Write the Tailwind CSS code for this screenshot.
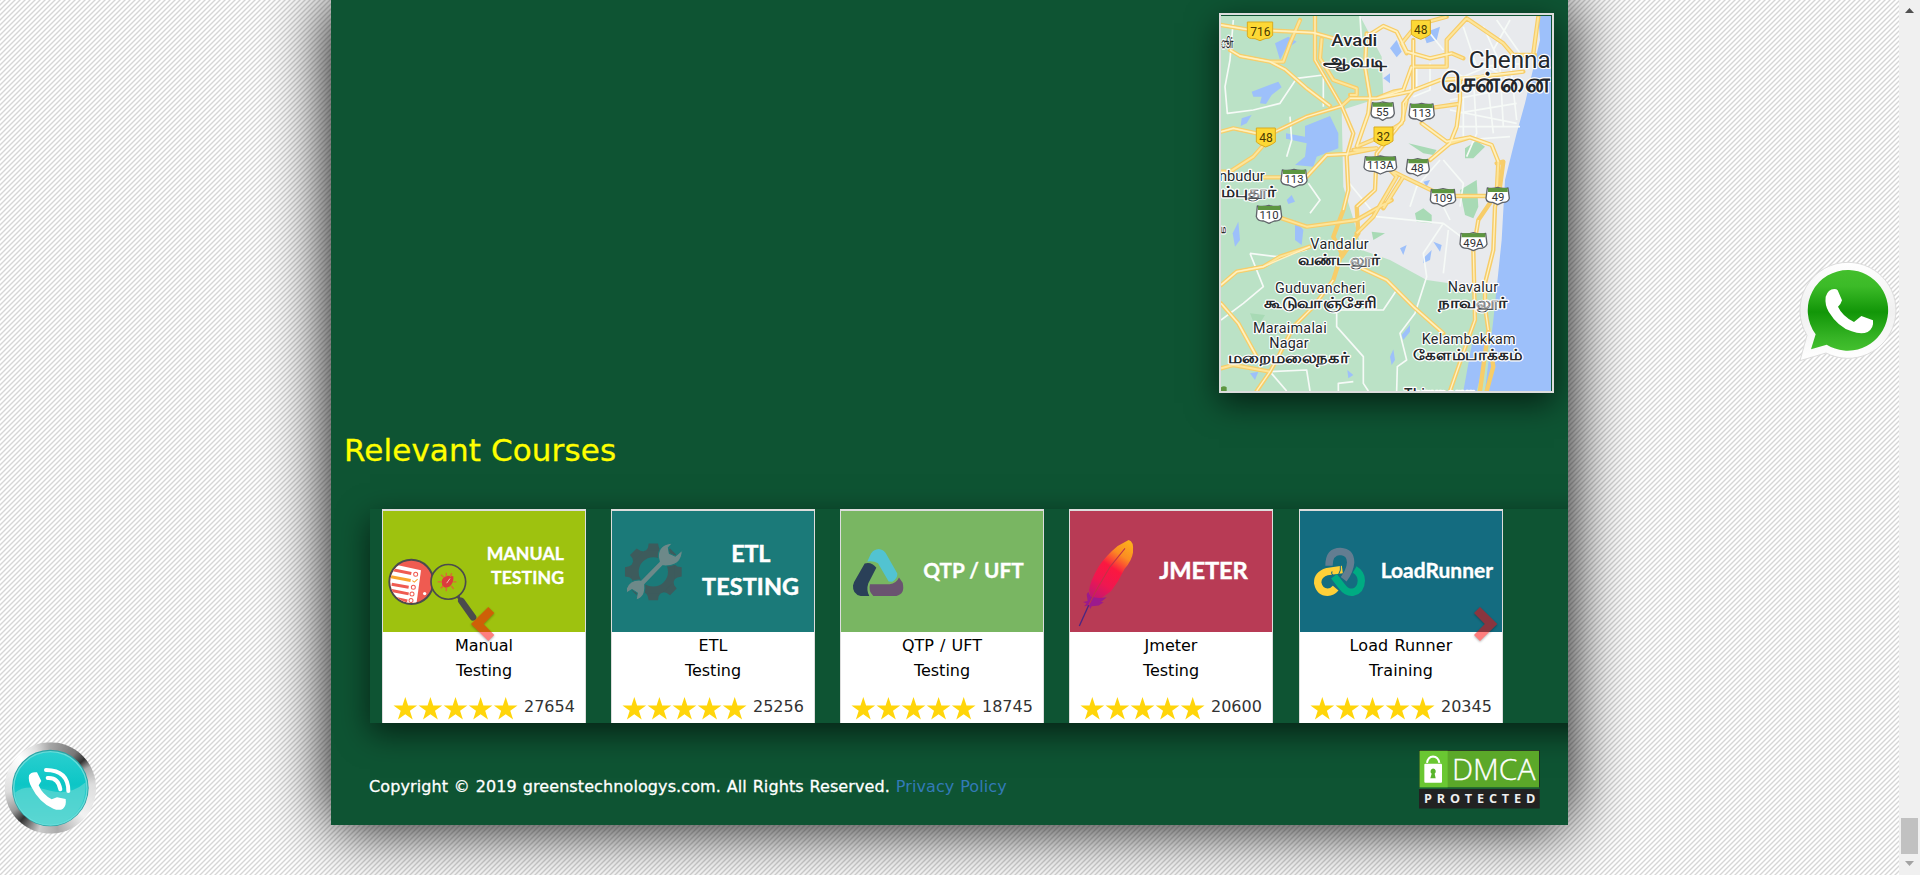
<!DOCTYPE html>
<html lang="en">
<head>
<meta charset="utf-8">
<title>Greens Technologys</title>
<script src="https://cdn.jsdelivr.net/npm/@tailwindcss/browser@4"></script>
</head>
<body class="h-[875px] overflow-hidden font-['DejaVu_Sans',sans-serif] text-base text-black">
<svg width="0" height="0" class="absolute">
  <defs>
    <path id="star" d="M11.8 0 L14.6 8.6 H23.6 L16.4 13.8 L19.2 22.5 L11.8 17.2 L4.4 22.5 L7.2 13.8 L0 8.6 H9Z"/>
    <g id="stars" fill="#ffd50a"><use href="#star"/><use href="#star" x="25.1"/><use href="#star" x="50.2"/><use href="#star" x="75.3"/><use href="#star" x="100.4"/></g>
  </defs>
</svg>
<div class="relative flex h-[875px] w-[1920px]">
  <main class="relative flex h-[875px] flex-1 overflow-hidden bg-white">
    <svg class="absolute inset-0" width="1899" height="875">
      <defs><pattern id="weave" width="5" height="5" patternUnits="userSpaceOnUse"><rect width="5" height="5" fill="#fff"/><path d="M-1 6L6 -1M-1 1L1 -1M4 6L6 4" stroke="#d6d6d6" stroke-width="1.4"/></pattern></defs>
      <rect width="1899" height="875" fill="url(#weave)"/>
    </svg>
    <section class="relative ml-[331px] h-[825px] w-[1237px] bg-[#0e5433] shadow-[0_0_60px_#000]">
      <div class="flex h-[825px] flex-col overflow-hidden">
        <!-- Map -->
        <div class="mt-[13px] mr-[14px] h-[380px] w-[335px] shrink-0 self-end border-2 border-[#ddd] pt-px shadow-[0_10px_30px_rgba(0,0,0,0.6)]">
          <svg width="330" height="375" viewBox="33 48 990 1125" font-family="Roboto, 'Noto Sans', sans-serif">
            <rect x="33" y="48" width="990" height="1125" fill="#bbe2c6"/>
            <path d="M450 48H1023V900L860 870L650 840L540 780L455 750L440 690L400 560L395 330L520 290L515 170Z" fill="#e8eaed"/>
            <path d="M985 48H1023V1173H825L850 960L875 720L885 540L920 400L945 310L990 120Z" fill="#9dc0fa"/>
            <path d="M760 1173L790 1010L845 1000L800 1173Z" fill="#9dc0fa"/>
            <g fill="#9dc0fa"><path d="M285 378L360 348L385 400V445L320 470L310 500L255 495L285 470L290 430L228 416V400L285 410Z"/><path d="M125 275L205 245L215 262L185 285L168 312L150 310L155 290L130 290Z"/><path d="M195 130L235 110L260 125L225 150L210 180Z"/><path d="M540 145L560 120L575 155L560 172Z"/><path d="M640 100L690 80L680 120L650 130Z"/><path d="M520 235L540 220V250Z"/><path d="M255 660L280 690L275 735L255 720Z"/><path d="M68 700L85 665L90 720L75 740Z"/><path d="M570 745L590 735L580 765Z"/><path d="M670 725L695 735L690 755Z"/><path d="M640 775L665 750L660 780L640 790Z"/><path d="M575 1005L600 975V995L580 1020Z"/><path d="M540 1070L550 1048L555 1080L545 1095Z"/><path d="M120 1120L145 1115L135 1140Z"/><path d="M412 1110L430 1125L415 1135Z"/><path d="M95 355L125 345L110 370L92 378Z"/><path d="M230 600L245 585L255 605L235 612Z"/><path d="M640 545L660 540L650 560Z"/></g>
            <g fill="#a8dab5"><path d="M595 430L680 450L670 465L640 460Z"/><path d="M765 445L800 422L825 440L790 475H765Z"/><path d="M750 570L800 540L805 620L790 655L765 645Z"/><path d="M615 640L640 625L665 645V670L620 665Z"/><path d="M485 695L525 700L490 720Z"/><path d="M120 940L165 945L150 970L130 965Z"/></g>
            <g fill="none" stroke="#f6faf7" stroke-width="5" stroke-linejoin="round">
              <path d="M70 60L60 180L45 260L52 340L130 330M130 330L210 310L260 235L340 225M240 350L245 420L230 470M450 48L455 130M340 230V320M410 540L500 650L700 670L780 730M700 670L640 760L650 830L615 940L570 1000L590 1080L562 1100L560 1173M120 760L160 860L100 910L33 960M120 760L200 770L290 750M380 930V980L460 1070V1150L475 1173M180 1115L230 1173M380 930L520 930L560 870M295 550L330 600L300 640M385 1173V1150L430 1145M180 1115L290 1110L300 1173"/>
              <path d="M620 200V260M660 190V270L610 290M700 200L760 230L830 200L905 240M720 300L930 260M740 340L920 310M760 290V420L900 410M790 230L800 400L770 470M830 220L850 400M870 200L880 380M900 180L920 360M720 330L920 370M740 380H930M700 480L760 550L750 620M690 600L720 660M820 80L870 190M900 60L850 150M860 60L930 160M640 75L700 150M690 480L620 560L600 620M760 80L800 200L950 190M700 820L715 690"/>
            </g>
            <g fill="none" stroke="#f7cd69" stroke-width="13" stroke-linejoin="round" stroke-linecap="round">
              <path id="r1" d="M33 75L110 88L310 98L370 115M60 150L90 168L180 185L225 208L290 265L360 318M180 185H220L240 130L270 60M335 115L330 175L370 240L440 265V285H420M470 100L465 200L480 290L475 340L440 440M470 110L520 78L560 95L590 155L660 175L725 160L760 175M590 160L575 130L620 75L710 50M770 55L710 120V200H610M770 55L880 130L910 165H975M605 200L580 270L550 275L500 295H420L395 318M500 295L600 275L690 240L780 235L940 215M750 240V300L740 380L720 430L660 480M675 322L745 312M635 370L710 425L780 412L845 435L865 485L860 580M780 412L720 430M33 395L70 385L140 400L165 410M440 440L500 415L575 370L590 300M33 515L60 515L130 470L165 430M290 530L350 465L410 462L500 445L430 450M160 532H215M500 490L580 530L700 588H860M530 500L560 530L490 650L440 700M580 530L520 625M545 600L440 660L290 680L200 650M33 855L80 815L160 800L210 770L300 740M455 805L530 840L610 920L700 1000M33 910L85 970L140 1070M33 1105L70 1095L180 1115M985 50L970 160"/>
              <path id="r2" d="M315 48V180L350 240L395 318L430 400L410 470L415 570L400 630L370 710L395 760L370 840L310 920L250 980L205 1070L180 1115L140 1173M395 318L290 350L165 410M610 120V270L580 310V360L500 460L495 570L440 620L445 700L395 770M860 490L880 485L870 560L855 620L850 750L825 850V920L835 990L810 1173M860 580L805 660L790 750L795 960L770 1030L720 1173M830 1173L850 1100L845 1070"/>
            </g>
            <g fill="none" stroke="#fff1b8" stroke-width="6" stroke-linejoin="round"><use href="#r1" stroke="#fde59a"/></g>
            <g fill="none" stroke="#fff1c2" stroke-width="4" stroke-linejoin="round">
              <path d="M33 75L110 88L310 98L370 115M60 150L90 168L180 185L225 208L290 265L360 318M470 100L465 200L480 290L475 340L440 440M470 110L520 78L560 95L590 155L660 175L725 160M605 200L580 270L500 295H420M500 295L600 275L690 240L940 215M750 240V300L740 380L720 430L660 480M635 370L710 425L780 412L845 435L865 485M33 395L70 385L140 400M290 530L350 465L410 462M33 855L80 815L160 800L300 740M455 805L530 840L610 920L700 1000M33 910L85 970L140 1070M315 48V180L350 240L395 318L430 400L410 470L415 570L400 630M395 318L290 350L165 410M370 840L310 920L250 980L205 1070L180 1115L140 1173M610 120V270L580 310V360L500 460L495 570L440 620M870 560L855 620L850 750L825 850V920L835 990M805 660L790 750L795 960L770 1030L720 1173"/>
            </g>
            <g font-size="36" text-anchor="middle" fill="#4a3a00">
              <g fill="#fdd835" stroke="#d9ab20" stroke-width="3"><path d="M112 66H188V106Q180 117 165 116L150 122L135 116Q112 117 112 106Z"/><path d="M604 61H661V103Q650 112 632 118Q614 112 604 103Z"/><path d="M139 384H196V426Q185 435 167 441Q149 435 139 426Z"/><path d="M492 381H549V423Q538 432 520 438Q502 432 492 423Z"/></g>
              <text x="151" y="107">716</text><text x="632" y="102">48</text><text x="168" y="425">48</text><text x="520" y="422">32</text>
            </g>
            <g font-size="34" text-anchor="middle" fill="#303134">
              <g fill="#fff" stroke="#60646a" stroke-width="4" stroke-linejoin="round">
                <path d="M487 308Q502 312 517 306Q535 312 549 308L553 340Q550 355 530 354L518 361L506 354Q484 355 483 340Z"/>
                <path d="M601 312Q618 316 635 310Q652 316 669 312L673 345Q668 358 650 357L635 364L620 357Q600 358 597 345Z"/>
                <path d="M466 470Q488 474 511 468Q534 474 556 470L560 502Q556 515 530 514L511 522L492 514Q466 515 462 502Z"/>
                <path d="M593 478Q608 482 623 476Q640 482 653 478L658 508Q655 522 637 521L623 528L609 521Q590 522 589 508Z"/>
                <path d="M217 510Q235 514 252 508Q270 514 287 510L291 542Q286 556 268 555L252 562L236 555Q216 556 213 542Z"/>
                <path d="M664 568Q682 572 699 566Q716 572 733 568L737 600Q732 612 716 611L699 619L682 611Q664 612 661 600Z"/>
                <path d="M832 564Q848 568 863 562Q880 568 894 564L898 595Q894 608 878 607L863 614L848 607Q830 608 828 595Z"/>
                <path d="M142 618Q160 622 177 616Q195 622 211 618L215 650Q211 664 193 663L177 670L161 663Q143 664 139 650Z"/>
                <path d="M753 700Q772 704 790 698Q810 704 827 700L831 732Q826 746 806 745L790 752L774 745Q754 746 750 732Z"/>
              </g>
              <path d="M488 314H548M603 318H668M468 476H555M595 484H653M219 516H286M666 574H732M834 570H893M144 624H211M755 706H826" stroke="#5d9640" stroke-width="12"/>
              <text x="517" y="347">55</text><text x="635" y="351">113</text><text x="511" y="508">113A</text><text x="622" y="515">48</text><text x="252" y="550">113</text><text x="699" y="606">109</text><text x="864" y="602">49</text><text x="177" y="658">110</text><text x="790" y="740">49A</text>
            </g>
            <g fill="#24282c" stroke="#fff" stroke-width="7" stroke-linejoin="round" paint-order="stroke">
              <text x="364" y="137" font-size="52" font-weight="500" textLength="138" lengthAdjust="spacingAndGlyphs">Avadi</text>
              <text x="776" y="204" font-size="73" textLength="246" lengthAdjust="spacingAndGlyphs">Chenna</text>
              <g font-size="43">
                <text x="27" y="544" font-size="42" textLength="137" lengthAdjust="spacingAndGlyphs">nbudur</text>
                <text x="301" y="747" textLength="175">Vandalur</text>
                <text x="195" y="879" textLength="271">Guduvancheri</text>
                <text x="713" y="875" textLength="151">Navalur</text>
                <text x="129" y="999" textLength="221">Maraimalai</text><text x="178" y="1044" textLength="118">Nagar</text>
                <text x="635" y="1032" textLength="282">Kelambakkam</text>
                <text x="582" y="1198" font-weight="500" textLength="210">Thiruporur</text>
              </g>
              <g font-size="46" font-weight="700">
                <text x="340" y="200" font-size="54" textLength="190" lengthAdjust="spacingAndGlyphs">ஆவடி</text>
                <text x="692" y="277" font-size="80" textLength="326" lengthAdjust="spacingAndGlyphs">சென்னை</text>
                <text x="33" y="145" textLength="38" lengthAdjust="spacingAndGlyphs">ூர்</text>
                <text x="33" y="592" textLength="165" lengthAdjust="spacingAndGlyphs">ம்புதூர்</text>
                <text x="33" y="698" font-size="36" textLength="16" lengthAdjust="spacingAndGlyphs">ம</text>
                <text x="264" y="794" textLength="247" lengthAdjust="spacingAndGlyphs">வண்டலூர்</text>
                <text x="162" y="924" textLength="338" lengthAdjust="spacingAndGlyphs">கூடுவாஞ்சேரி</text>
                <text x="683" y="923" textLength="210" lengthAdjust="spacingAndGlyphs">நாவலூர்</text>
                <text x="54" y="1090" textLength="364" lengthAdjust="spacingAndGlyphs">மறைமலைநகர்</text>
                <text x="608" y="1079" textLength="330" lengthAdjust="spacingAndGlyphs">கேளம்பாக்கம்</text>
              </g>
            </g>
            <path d="M33 1162Q42 1155 50 1162V1173H33Z" fill="#5d9640"/>
          </svg>
        </div>
        <h2 class="mt-[35px] ml-[13px] h-[44px] text-[31px] leading-[44px] tracking-[0.12px] text-[#ff0] [-webkit-text-stroke:0.3px_#ff0]">Relevant Courses</h2>
        <!-- Carousel -->
        <div class="relative mt-[37px] ml-[39px] flex h-[214px] w-[1298px] shrink-0 gap-[25px] bg-[#0e5433] pl-3 shadow-[0_10px_30px_rgba(0,0,0,0.6)]">
          <article class="h-[214px] w-[204px] border-x border-t-2 border-[#ddd] bg-white text-center">
            <svg class="block h-[121px] w-[202px]" viewBox="159 273 606 362" preserveAspectRatio="none">
              <rect x="159" y="273" width="606" height="362" fill="#9ec20f"/>
              <clipPath id="lens"><circle cx="244" cy="485" r="63"/></clipPath>
              <circle cx="244" cy="485" r="66" fill="#ef5b51" stroke="#4b4b4d" stroke-width="6"/>
              <g clip-path="url(#lens)"><path d="M175 429L273 450L258 560H150Z" fill="#fff"/><path d="M185 448L244 460M185 492L236 501M185 511L236 521M185 532L232 542" stroke="#ef5b51" stroke-width="9"/><path d="M183 470L242 481" stroke="#f9a52b" stroke-width="9"/><g fill="none" stroke="#ef5b51" stroke-width="3"><circle cx="257" cy="462" r="6"/><circle cx="250" cy="501" r="6"/><circle cx="246" cy="521" r="6"/><circle cx="243" cy="541" r="6"/></g><path d="M247 481L253 486L263 477" fill="none" stroke="#f9a52b" stroke-width="3"/><circle cx="284" cy="520" r="5" fill="#fff"/></g>
              <circle cx="355" cy="485" r="52" fill="#9ec20f" stroke="#4b4b4d" stroke-width="5"/>
              <path d="M335 485Q336 470 354 467L370 468Q372 486 360 498Q345 507 337 497Z" fill="#dc3b3c"/><path d="M323 485H335M333 464L342 472M349 458V468M365 459L361 470M370 485H379M364 497L371 506M349 502V513M332 504L340 497" stroke="#db6b34" stroke-width="4"/><path d="M350 489L360 475" stroke="#fff" stroke-width="2"/>
              <path d="M384 528L392 541L429 590" fill="none" stroke="#4b4b4d" stroke-width="9"/><path d="M394 542L429 591" stroke="#4b4b4d" stroke-width="20" stroke-linecap="round"/>
              <g fill="#fff" font-family="Lato, sans-serif" font-weight="700" stroke="#fff" stroke-width="1"><text x="470" y="419" font-size="53" textLength="232">MANUAL</text><text x="483" y="491" font-size="53" textLength="219">TESTING</text></g>
            </svg>
            <p class="pt-px leading-[25px]">Manual<br>Testing</p>
            <div class="mt-[11px] flex pl-[10px] text-[#333]"><svg class="mt-[3px] shrink-0" width="131" height="24"><use href="#stars" x=".5"/></svg><span class="pt-px leading-6">27654</span></div>
          </article>
          <article class="h-[214px] w-[204px] border-x border-t-2 border-[#ddd] bg-white text-center">
            <svg class="block h-[121px] w-[202px]" viewBox="846 273 606 362" preserveAspectRatio="none">
              <rect x="846" y="273" width="606" height="362" fill="#1b7a79"/>
              <g transform="translate(970 455)"><circle r="56" fill="none" stroke="#3d5b5c" stroke-width="24"/><g fill="#3d5b5c"><path id="tooth" d="M-22 -64L-16 -72L-14 -85H14L17 -72L22 -64Z"/><use href="#tooth" transform="rotate(45)"/><use href="#tooth" transform="rotate(90)"/><use href="#tooth" transform="rotate(135)"/><use href="#tooth" transform="rotate(180)"/><use href="#tooth" transform="rotate(225)"/><use href="#tooth" transform="rotate(270)"/><use href="#tooth" transform="rotate(315)"/></g></g>
              <path d="M1028 369Q985 372 985 410L988 424L933 480Q900 477 889 505L890 518L906 508L922 518L920 530L918 539Q948 533 944 493L998 437Q1056 442 1057 390L1036 408L1018 400L1015 383Z" fill="#6d8989" stroke="#1b7a79" stroke-width="3"/>
              <g fill="#fff" font-family="Lato, sans-serif" font-weight="700" stroke="#fff" stroke-width="1.5" font-size="70"><text x="1204" y="427" textLength="117">ETL</text><text x="1116" y="524" textLength="291">TESTING</text></g>
            </svg>
            <p class="pt-px leading-[25px]">ETL<br>Testing</p>
            <div class="mt-[11px] flex pl-[10px] text-[#333]"><svg class="mt-[3px] shrink-0" width="131" height="24"><use href="#stars" x=".5"/></svg><span class="pt-px leading-6">25256</span></div>
          </article>
          <article class="h-[214px] w-[204px] border-x border-t-2 border-[#ddd] bg-white text-center">
            <svg class="block h-[121px] w-[202px]" viewBox="63 63 606 362" preserveAspectRatio="none">
              <rect x="63" y="63" width="606" height="362" fill="#79b662"/>
              <path d="M142 214L153 190Q162 178 176 177Q190 178 197 189L232 250Q233 265 217 275L206 274L174 219Q160 211 142 214Z" fill="#52c3d1"/>
              <path d="M134 220Q155 214 169 233L145 279Q138 300 148 317H122Q97 312 99 286Q101 275 107 267Z" fill="#2a4058"/>
              <path d="M150 282H209Q229 280 237 262L248 278Q256 312 229 317H160Q144 302 150 282Z" fill="#6a5370"/>
              <text x="310" y="263" fill="#fff" font-family="Lato, sans-serif" font-weight="700" stroke="#fff" stroke-width="1" font-size="64" textLength="301" lengthAdjust="spacingAndGlyphs">QTP / UFT</text>
            </svg>
            <p class="pt-px leading-[25px] [word-spacing:1px]">QTP / UFT<br>Testing</p>
            <div class="mt-[11px] flex pl-[10px] text-[#333]"><svg class="mt-[3px] shrink-0" width="131" height="24"><use href="#stars" x=".5"/></svg><span class="pt-px leading-6">18745</span></div>
          </article>
          <article class="h-[214px] w-[204px] border-x border-t-2 border-[#ddd] bg-white text-center">
            <svg class="block h-[121px] w-[202px]" viewBox="750 63 606 362" preserveAspectRatio="none">
              <defs><linearGradient id="fe" gradientUnits="userSpaceOnUse" x1="930" y1="150" x2="800" y2="345"><stop offset="0" stop-color="#fdb31c"/><stop offset=".22" stop-color="#fb8c22"/><stop offset=".42" stop-color="#fb1840"/><stop offset=".65" stop-color="#ef1750"/><stop offset=".85" stop-color="#c7176f"/><stop offset="1" stop-color="#8e1a8b"/></linearGradient></defs>
              <rect x="750" y="63" width="606" height="362" fill="#b83b55"/>
              <path d="M926 150Q942 153 939 187Q936 210 914 236L893 275L873 303L845 323Q828 328 812 318L807 301Q810 273 836 229Q860 195 893 168Z" fill="url(#fe)"/>
              <path d="M805 305L812 319Q830 326 860 321L843 335L851 336L836 346L815 348L811 356L807 346L792 348L800 340L789 335L803 332L800 312Z" fill="#9b1a8d"/>
              <path d="M915 175L870 230L826 305L805 347" fill="none" stroke="#bf3445" stroke-width="3"/><path d="M806 345L778 407" stroke="#4a2682" stroke-width="4"/>
              <text x="1018" y="265" fill="#fff" font-family="Lato, sans-serif" font-weight="700" stroke="#fff" stroke-width="1.5" font-size="71" textLength="265">JMETER</text>
            </svg>
            <p class="pt-px leading-[25px]">Jmeter<br>Testing</p>
            <div class="mt-[11px] flex pl-[10px] text-[#333]"><svg class="mt-[3px] shrink-0" width="131" height="24"><use href="#stars" x=".5"/></svg><span class="pt-px leading-6">20600</span></div>
          </article>
          <article class="ml-px h-[214px] w-[204px] border-x border-t-2 border-[#ddd] bg-white text-center">
            <svg class="block h-[121px] w-[202px]" viewBox="300 63 606 362" preserveAspectRatio="none">
              <rect x="300" y="63" width="606" height="362" fill="#146c80"/>
              <g fill="none" stroke-width="22"><path d="M387 227Q387 184 421 184Q452 186 452 217Q450 242 431 267" stroke="#637d91"/><path d="M427 238L382 244Q352 253 353 278Q359 306 383 306Q397 306 407 294" stroke="#ffd038"/><path d="M402 258L427 290Q440 308 459 306Q483 300 484 271Q484 250 464 238" stroke="#00ab82"/></g>
              <path d="M421 221V240L415 255M401 257Q391 249 397 244" fill="none" stroke="#146c80" stroke-width="3"/>
              <text x="542" y="263" fill="#fff" font-family="Lato, sans-serif" font-weight="700" stroke="#fff" stroke-width="1" font-size="62" textLength="337" lengthAdjust="spacingAndGlyphs">LoadRunner</text>
            </svg>
            <p class="pt-px leading-[25px] tracking-[0.1px] [word-spacing:1px]">Load Runner<br>Training</p>
            <div class="mt-[11px] flex pl-[10px] text-[#333]"><svg class="mt-[3px] shrink-0" width="131" height="24"><use href="#stars" x=".5"/></svg><span class="pt-px leading-6">20345</span></div>
          </article>
          <svg class="absolute top-[98px] left-[101px] opacity-50 drop-shadow-[0_1px_1px_rgba(0,0,0,0.6)]" width="24" height="36" viewBox="0 0 24 36"><path d="M17.3 0L23.3 6L12.5 17L23.3 28L17.3 34L0 17Z" fill="#f00"/></svg>
          <svg class="absolute top-[98px] left-[1104px] opacity-50 drop-shadow-[0_1px_1px_rgba(0,0,0,0.6)]" width="24" height="36" viewBox="0 0 24 36"><path d="M6 0L0 6L10.8 17L0 28L6 34L23.3 17Z" fill="#f00"/></svg>
        </div>
        <footer class="relative flex justify-between pt-[27px] pr-7 pl-[38px] text-white">
          <p class="pt-[25px] leading-6 tracking-[0.1px] [word-spacing:0.6px]"><span class="font-medium [-webkit-text-stroke:0.3px_#fff]">Copyright © 2019 greenstechnologys.com. All Rights Reserved.</span> <a class="text-[#337ab7]">Privacy Policy</a></p>
          <svg width="121" height="59" viewBox="118 60 363 176" font-family="'Open Sans', sans-serif">
            <rect x="118" y="60" width="362" height="175" fill="#222"/><rect x="120" y="62" width="358" height="110" fill="#5ba829"/><rect x="120" y="62" width="84" height="110" fill="#6ac732"/><path d="M118 174H480" stroke="#17773a" stroke-width="4"/>
            <path d="M142 98Q145 80 160 79Q176 80 179 98" fill="none" stroke="#fff" stroke-width="6"/><rect x="134" y="101" width="53" height="57" rx="3" fill="#fff"/><path d="M160 115A9 9 0 0 1 165 131L168 144H152L156 131A9 9 0 0 1 160 115Z" fill="#58b52b"/>
            <text x="217" y="150" fill="#fff" font-size="87" font-weight="300" textLength="250" lengthAdjust="spacingAndGlyphs" stroke="#fff" stroke-width="1">DMCA</text>
            <text x="133" y="220" fill="#eee" font-size="38" font-weight="700" textLength="334">PROTECTED</text>
          </svg>
        </footer>
      </div>
    </section>
    <!-- Floating contact buttons -->
    <svg class="absolute top-[240px] left-[1780px]" width="119" height="140" viewBox="0 0 357 420">
      <defs><linearGradient id="wa" x2="0" y2="1"><stop stop-color="#43bf2c"/><stop offset=".2" stop-color="#3cbb28"/><stop offset=".52" stop-color="#129608"/><stop offset=".85" stop-color="#37b526"/><stop offset="1" stop-color="#43c02e"/></linearGradient><linearGradient id="wb" x2="0" y2="1"><stop stop-color="#fff"/><stop offset=".5" stop-color="#f0f0f0"/><stop offset="1" stop-color="#fff"/></linearGradient></defs>
      <path d="M207 67A144 144 0 1 1 138 339L60 362L81 286A144 144 0 0 1 207 67Z" fill="url(#wb)" stroke="#dcdcdc" stroke-width="3"/>
      <path d="M207 90A121 121 0 1 1 140 314L93 328L107 283A121 121 0 0 1 207 90Z" fill="url(#wa)"/>
      <path d="M137 170Q144 148 163 147Q170 147 173 151L186 181Q183 192 174 200Q187 228 222 246L244 228L279 241Q282 265 263 276Q244 285 215 274Q174 261 146 215Q134 194 137 170Z" fill="#fff"/>
    </svg>
    <svg class="absolute top-[730px] left-0" width="110" height="120" viewBox="0 0 330 360">
      <defs><linearGradient id="aq" x2="0" y2="1"><stop stop-color="#2acfcf"/><stop offset=".45" stop-color="#0cc6c6"/><stop offset="1" stop-color="#58d8d3"/></linearGradient></defs>
      <foreignObject x="14" y="37" width="274" height="274"><div class="h-full w-full rounded-full bg-[conic-gradient(from_0deg,#a5a5a5_0deg,#777_35deg,#333_50deg,#aaa_62deg,#ddd_85deg,#f2f2f2_130deg,#aaa_170deg,#ccc_195deg,#333_222deg,#999_238deg,#ddd_265deg,#fff_315deg,#ddd_340deg,#a5a5a5_360deg)]"></div></foreignObject>
      <circle cx="151" cy="174" r="115" fill="#2aa3a5"/><circle cx="151" cy="175" r="110" fill="url(#aq)" stroke="#66dcd9" stroke-width="4"/>
      <path d="M45 188Q75 160 150 182Q210 198 257 157Q260 225 215 260Q150 305 85 260Q47 230 45 188Z" fill="#5cd6d1" opacity=".75"/>
      <path d="M87 136Q94 124 111 127L124 153L116 166Q127 193 155 208L171 202L197 207Q200 226 189 236Q178 243 160 236Q118 218 94 170Q84 153 87 136Z" fill="#fff"/>
      <path d="M143 144Q175 142 181 178M138 120Q205 121 205 183" fill="none" stroke="#fff" stroke-width="12" stroke-linecap="round"/>
    </svg>
  </main>
  <aside class="flex h-[875px] w-[21px] flex-col items-center justify-between bg-[#f0f0f0]">
    <svg class="mt-[8px]" width="9" height="5"><path d="M0 5L4.5 0L9 5Z" fill="#505050"/></svg>
    <div class="flex flex-col items-center"><div class="h-9 w-[17px] bg-[#c1c1c1]"></div><svg class="mt-[7px] mb-[9px]" width="9" height="5"><path d="M0 0L4.5 5L9 0Z" fill="#a3a3a3"/></svg></div>
  </aside>
</div>
</body>
</html>
